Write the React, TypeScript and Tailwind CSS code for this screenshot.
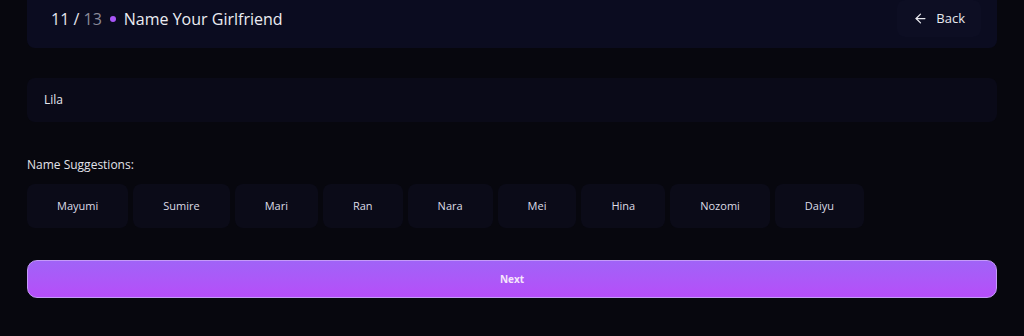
import { ArrowLeft } from "lucide-react";

const names = ["Mayumi", "Sumire", "Mari", "Ran", "Nara", "Mei", "Hina", "Nozomi", "Daiyu"];

export default function App() {
  return (
    <div className="min-h-[336px] w-full bg-[#07070e] px-[27px] font-['Open_Sans',sans-serif] text-white">
      {/* header */}
      <div className="flex h-[48px] items-start justify-between rounded-b-lg bg-[#0b0c20] pl-[24px] pr-[16px]">
        <div className="flex h-[37px] items-center gap-[8px] text-[16px] font-medium">
          <span>
            <span className="text-[#e4e4ec]">11 / </span>
            <span className="text-[#8a8a99]">13</span>
          </span>
          <span className="h-[6px] w-[6px] rounded-full bg-[#a855f7]" />
          <span className="text-[#ececf2]">Name Your Girlfriend</span>
        </div>
        <button className="flex h-[37px] items-center gap-[8px] rounded-lg bg-[#0d0e23] px-[16px] text-[13px] font-medium text-[#e8e8ee]">
          <ArrowLeft className="h-[15px] w-[15px]" strokeWidth={2} />
          Back
        </button>
      </div>

      {/* input */}
      <div className="mt-[30px] flex h-[44px] items-center rounded-lg bg-[#0a0a18] px-[17px] text-[12px] font-medium text-[#e6e6ee]">
        Lila
      </div>

      <div className="mt-[34px] text-[12px] text-[#e2e2ea]">Name Suggestions:</div>

      <div className="mt-[10px] flex gap-[5px]">
        {names.map((n) => (
          <button
            key={n}
            className="flex h-[44px] items-center rounded-lg bg-[#0b0b18] px-[30px] text-[11px] font-medium text-[#dcdce6]"
          >
            {n}
          </button>
        ))}
      </div>

      <button className="mt-[32px] flex h-[38px] w-full items-center justify-center rounded-[10px] border border-[#c49af8] bg-gradient-to-b from-[#a063f7] to-[#b64df9] text-[10px] font-bold text-[#f6e6fb]">
        Next
      </button>
    </div>
  );
}
